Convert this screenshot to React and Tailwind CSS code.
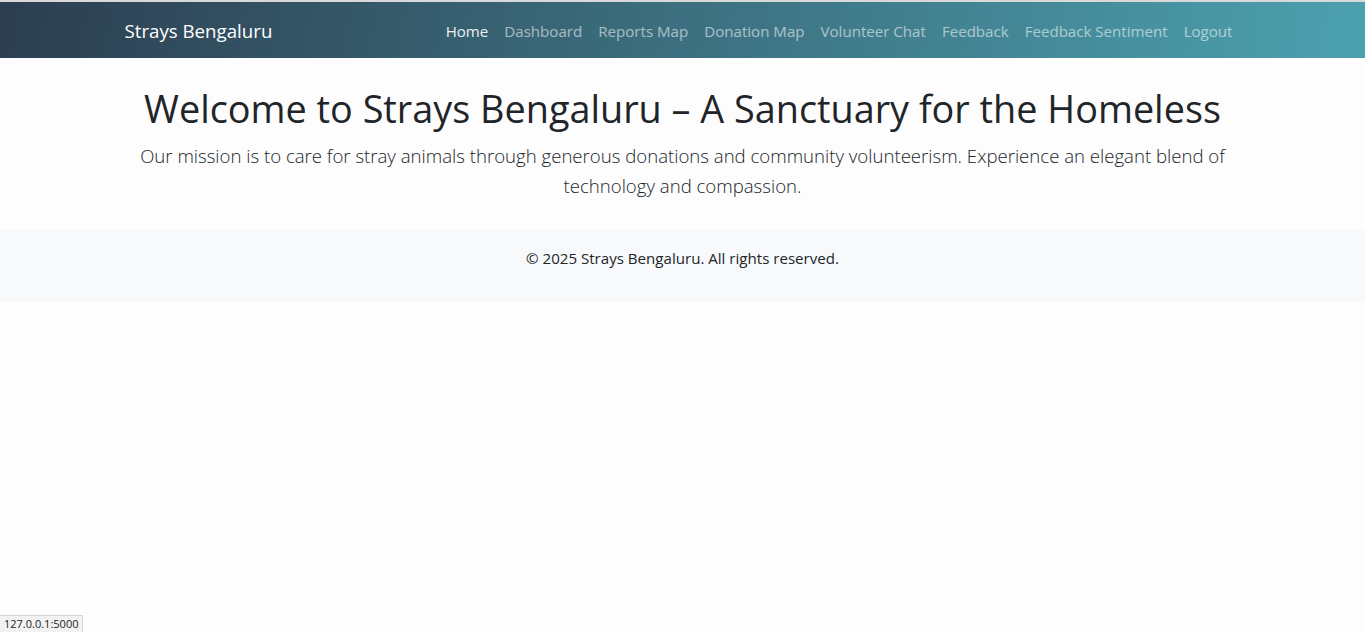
// App.jsx

const navLinks = [
  { name: 'Home', active: true },
  { name: 'Dashboard' },
  { name: 'Reports Map' },
  { name: 'Donation Map' },
  { name: 'Volunteer Chat' },
  { name: 'Feedback' },
  { name: 'Feedback Sentiment' },
  { name: 'Logout' },
];

const App = () => {
  return (
    <div className="relative min-h-[632px] bg-[#fdfdfd] font-['Open_Sans',sans-serif] text-[#212529]">
      {/* TOP EDGE */}
      <div className="h-[2px] bg-[#d9d9d9]" />

      {/* NAVBAR */}
      <nav className="h-[56px] bg-[linear-gradient(100deg,#2c3e50,#4ca1af)]">
        <div className="mx-auto flex h-full w-[1140px] items-center justify-between px-3 pt-[2px]">
          <a className="text-[18.7px] leading-[30px] text-white">Strays Bengaluru</a>

          <ul className="flex items-center">
            {navLinks.map((item) => (
              <li key={item.name}>
                <a
                  className={
                    item.active
                      ? 'px-2 text-[15.1px] leading-6 text-white/90'
                      : 'px-2 text-[15.1px] leading-6 text-white/55'
                  }
                >
                  {item.name}
                </a>
              </li>
            ))}
          </ul>
        </div>
      </nav>

      {/* HERO */}
      <section className="mx-auto w-[1140px] px-3 pt-[27px] pb-[29px] text-center">
        <h1 className="mb-2 text-[37.8px] leading-[48px] font-normal whitespace-nowrap">
          Welcome to Strays Bengaluru – A Sanctuary for the Homeless
        </h1>
        <p className="text-[18.6px] leading-[30px] font-light">
          Our mission is to care for stray animals through generous donations and community volunteerism. Experience an elegant blend of technology and compassion.
        </p>
      </section>

      {/* FOOTER */}
      <footer className="bg-[#f8f9fa] py-4 text-center">
        <p className="mb-4 text-[15.1px] leading-6">
          © 2025 Strays Bengaluru. All rights reserved.
        </p>
      </footer>

      {/* STATUS TIP */}
      <div className="absolute bottom-0 left-0 border-t border-r border-[#d6d6d6] bg-[#f2f2f2] px-1 text-[11px] leading-[16px] text-[#222]">
        127.0.0.1:5000
      </div>
    </div>
  );
};

export default App;
